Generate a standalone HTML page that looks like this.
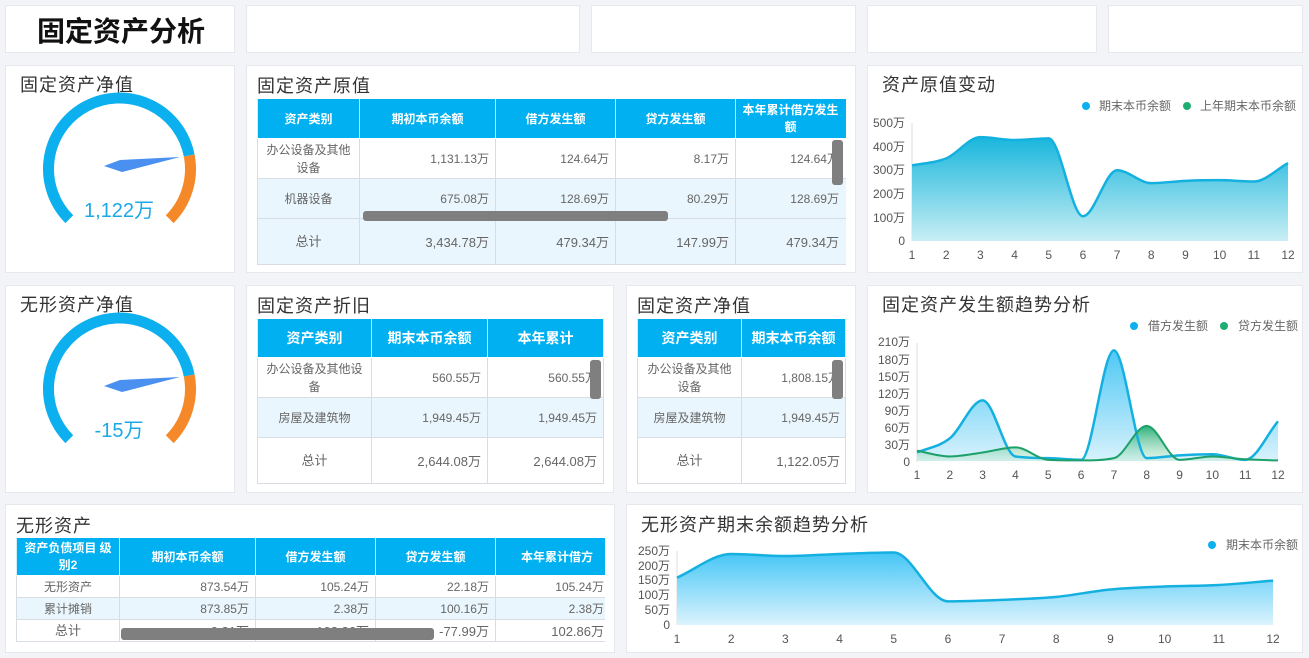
<!DOCTYPE html>
<html><head><meta charset="utf-8">
<style>
*{box-sizing:border-box;margin:0;padding:0}
body{width:1309px;height:658px;background:#f3f4f8;font-family:"Liberation Sans","Noto Sans CJK SC",sans-serif;position:relative;overflow:hidden;color:#333}
.p{position:absolute;background:#fff;border:1px solid #e6e8ee}
.t{position:absolute;font-size:18px;color:#333;letter-spacing:1px;white-space:nowrap}
table{position:absolute;border-collapse:collapse;table-layout:fixed;font-size:12px;color:#666}
td,th{border:1px solid #d8dde3;overflow:hidden;white-space:nowrap}
th{background:#00b0f0;color:#fff;font-weight:bold;font-size:12px;text-align:center;border-color:#fff #d0eefa}
td{text-align:right;padding-right:6px}
td.c{text-align:center;padding:0 4px;white-space:normal;line-height:18px}
tr.b td{background:#eaf6fd}
.sb{position:absolute;background:#7f7f7f;border-radius:3px}
svg text{font-family:"Liberation Sans","Noto Sans CJK SC",sans-serif}
</style></head><body>
<div class="p" style="left:5px;top:5px;width:230px;height:48px"></div>
<div style="position:absolute;left:37px;top:10px;font-size:28px;font-weight:bold;color:#111">固定资产分析</div>
<div class="p" style="left:246px;top:5px;width:334px;height:48px"></div>
<div class="p" style="left:591px;top:5px;width:265px;height:48px"></div>
<div class="p" style="left:867px;top:5px;width:230px;height:48px"></div>
<div class="p" style="left:1108px;top:5px;width:195px;height:48px"></div>

<div class="p" style="left:5px;top:65px;width:230px;height:208px"></div>
<div class="t" style="left:20px;top:71px">固定资产净值</div>
<svg style="position:absolute;left:0;top:60px" width="240" height="220">
<g transform="translate(0,-60)">
<path d="M69.3 219.2 A71 71 0 1 1 189.2 155.5" fill="none" stroke="#0cb0ee" stroke-width="11"/>
<path d="M189.2 155.5 A71 71 0 0 1 169.7 219.2" fill="none" stroke="#f5892a" stroke-width="11"/>
<polygon points="180,157 120,160 104,166 122,172" fill="#4a90f0"/>
<text x="119" y="217" font-size="20" fill="#1aa9e6" text-anchor="middle">1,122万</text>
</g></svg>

<div class="p" style="left:246px;top:65px;width:610px;height:208px;overflow:hidden">
<div class="t" style="left:10px;top:6px">固定资产原值</div>
<table style="left:10px;top:32px;width:598px">
<colgroup><col style="width:102px"><col style="width:136px"><col style="width:120px"><col style="width:120px"><col style="width:120px"></colgroup>
<tr style="height:40px"><th>资产类别</th><th>期初本币余额</th><th>借方发生额</th><th>贷方发生额</th><th style="white-space:normal;line-height:17px;padding:0 12px 0 2px">本年累计借方发生额</th></tr>
<tr style="height:40px"><td class="c">办公设备及其他设备</td><td>1,131.13万</td><td>124.64万</td><td>8.17万</td><td style="padding-right:16px">124.64万</td></tr>
<tr class="b" style="height:40px"><td class="c">机器设备</td><td>675.08万</td><td>128.69万</td><td>80.29万</td><td style="padding-right:16px">128.69万</td></tr>
<tr class="b" style="height:46px"><td class="c" style="font-size:13px">总计</td><td style="font-size:13px">3,434.78万</td><td style="font-size:13px">479.34万</td><td style="font-size:13px">147.99万</td><td style="font-size:13px;padding-right:16px">479.34万</td></tr>
</table>
<div style="position:absolute;left:599px;top:30px;width:12px;height:180px;background:#fff"></div>
</div>
<div class="sb" style="left:363px;top:211px;width:305px;height:10px"></div>
<div class="sb" style="left:832px;top:140px;width:11px;height:45px"></div>

<div class="p" style="left:867px;top:65px;width:436px;height:208px"></div>
<div class="t" style="left:882px;top:71px">资产原值变动</div>
<svg style="position:absolute;left:867px;top:65px" width="436" height="208">
<defs><linearGradient id="g1" x1="0" y1="0" x2="0" y2="1"><stop offset="0" stop-color="#18b6dc"/><stop offset="1" stop-color="#c8eef4"/></linearGradient>
<linearGradient id="g2" x1="0" y1="0" x2="0" y2="1"><stop offset="0" stop-color="#4fc8f5"/><stop offset="1" stop-color="#d8f2fc"/></linearGradient>
<linearGradient id="g3" x1="0" y1="0" x2="0" y2="1"><stop offset="0" stop-color="#2bb07a"/><stop offset="1" stop-color="#c8ecd8" stop-opacity=".5"/></linearGradient>
<linearGradient id="g4" x1="0" y1="0" x2="0" y2="1"><stop offset="0" stop-color="#45c6f6"/><stop offset="1" stop-color="#dcf3fd"/></linearGradient></defs>
<circle cx="219" cy="41" r="4" fill="#0cb0ee"/><text x="232" y="45" font-size="12" fill="#666">期末本币余额</text>
<circle cx="320" cy="41" r="4" fill="#1fae72"/><text x="333" y="45" font-size="12" fill="#666">上年期末本币余额</text>
<g font-size="12" fill="#555" text-anchor="end">
<text x="38" y="62">500万</text><text x="38" y="86">400万</text><text x="38" y="109">300万</text><text x="38" y="133">200万</text><text x="38" y="157">100万</text><text x="38" y="180">0</text></g>
<line x1="45" y1="58" x2="45" y2="176" stroke="#ddd"/>
<path id="c1a" fill="url(#g1)"/><path id="c1l" fill="none" stroke="#14b0e0" stroke-width="2.5"/>
<g font-size="12" fill="#555" text-anchor="middle" id="x1"></g>
</svg>

<div class="p" style="left:5px;top:285px;width:230px;height:208px"></div>
<div class="t" style="left:20px;top:291px">无形资产净值</div>
<svg style="position:absolute;left:0;top:280px" width="240" height="220">
<g transform="translate(0,-60)">
<path d="M69.3 219.2 A71 71 0 1 1 189.2 155.5" fill="none" stroke="#0cb0ee" stroke-width="11"/>
<path d="M189.2 155.5 A71 71 0 0 1 169.7 219.2" fill="none" stroke="#f5892a" stroke-width="11"/>
<polygon points="180,157 120,160 104,166 122,172" fill="#4a90f0"/>
<text x="119" y="217" font-size="20" fill="#1aa9e6" text-anchor="middle">-15万</text>
</g></svg>

<div class="p" style="left:246px;top:285px;width:368px;height:208px;overflow:hidden">
<div class="t" style="left:10px;top:6px">固定资产折旧</div>
<table style="left:10px;top:32px;width:346px">
<colgroup><col style="width:114px"><col style="width:116px"><col style="width:116px"></colgroup>
<tr style="height:39px"><th style="font-size:14px">资产类别</th><th style="font-size:14px">期末本币余额</th><th style="font-size:14px">本年累计</th></tr>
<tr style="height:40px"><td class="c">办公设备及其他设备</td><td>560.55万</td><td>560.55万</td></tr>
<tr class="b" style="height:40px"><td class="c">房屋及建筑物</td><td>1,949.45万</td><td>1,949.45万</td></tr>
<tr style="height:46px"><td class="c" style="font-size:13px">总计</td><td style="font-size:13px">2,644.08万</td><td style="font-size:13px">2,644.08万</td></tr>
</table></div>
<div class="sb" style="left:590px;top:360px;width:11px;height:39px"></div>

<div class="p" style="left:626px;top:285px;width:230px;height:208px;overflow:hidden">
<div class="t" style="left:10px;top:6px">固定资产净值</div>
<table style="left:10px;top:32px;width:208px">
<colgroup><col style="width:104px"><col style="width:104px"></colgroup>
<tr style="height:39px"><th style="font-size:14px">资产类别</th><th style="font-size:14px">期末本币余额</th></tr>
<tr style="height:40px"><td class="c">办公设备及其他设备</td><td style="padding-right:5px">1,808.15万</td></tr>
<tr class="b" style="height:40px"><td class="c">房屋及建筑物</td><td style="padding-right:5px">1,949.45万</td></tr>
<tr style="height:46px"><td class="c" style="font-size:13px">总计</td><td style="padding-right:5px;font-size:13px">1,122.05万</td></tr>
</table></div>
<div class="sb" style="left:832px;top:360px;width:11px;height:39px"></div>

<div class="p" style="left:867px;top:285px;width:436px;height:208px"></div>
<div class="t" style="left:882px;top:291px">固定资产发生额趋势分析</div>
<svg style="position:absolute;left:867px;top:285px" width="436" height="208">
<circle cx="267" cy="41" r="4" fill="#0cb0ee"/><text x="281" y="45" font-size="12" fill="#666">借方发生额</text>
<circle cx="357" cy="41" r="4" fill="#1fae72"/><text x="371" y="45" font-size="12" fill="#666">贷方发生额</text>
<g font-size="12" fill="#555" text-anchor="end">
<text x="43" y="61">210万</text><text x="43" y="79">180万</text><text x="43" y="96">150万</text><text x="43" y="113">120万</text><text x="43" y="130">90万</text><text x="43" y="147">60万</text><text x="43" y="164">30万</text><text x="43" y="181">0</text></g>
<line x1="50" y1="58" x2="50" y2="177" stroke="#ddd"/>
<path id="c2a" fill="url(#g2)"/><path id="c3a" fill="url(#g3)"/>
<path id="c2l" fill="none" stroke="#14b0e0" stroke-width="2.5"/><path id="c3l" fill="none" stroke="#1ea06a" stroke-width="2"/>
<g font-size="12" fill="#555" text-anchor="middle" id="x2"></g>
</svg>

<div class="p" style="left:5px;top:504px;width:610px;height:149px;overflow:hidden">
<div class="t" style="left:10px;top:7px">无形资产</div>
<table style="left:10px;top:32px;width:610px">
<colgroup><col style="width:103px"><col style="width:136px"><col style="width:120px"><col style="width:120px"><col style="width:131px"></colgroup>
<tr style="height:38px"><th style="white-space:normal;line-height:17px;padding:0 6px">资产负债项目 级别2</th><th>期初本币余额</th><th>借方发生额</th><th>贷方发生额</th><th style="text-align:left;padding-left:25px">本年累计借方</th></tr>
<tr style="height:22px"><td class="c">无形资产</td><td>873.54万</td><td>105.24万</td><td>22.18万</td><td style="padding-right:22px">105.24万</td></tr>
<tr class="b" style="height:22px"><td class="c">累计摊销</td><td>873.85万</td><td>2.38万</td><td>100.16万</td><td style="padding-right:22px">2.38万</td></tr>
<tr style="height:22px"><td class="c" style="font-size:13px">总计</td><td style="font-size:13px">-0.31万</td><td style="font-size:13px">102.86万</td><td style="font-size:13px">-77.99万</td><td style="font-size:13px;padding-right:22px">102.86万</td></tr>
</table>
<div style="position:absolute;left:599px;top:30px;width:12px;height:120px;background:#fff"></div>
</div>
<div class="sb" style="left:121px;top:628px;width:313px;height:12px"></div>

<div class="p" style="left:626px;top:504px;width:677px;height:149px"></div>
<div class="t" style="left:641px;top:511px">无形资产期末余额趋势分析</div>
<svg style="position:absolute;left:626px;top:504px" width="677" height="149">
<circle cx="586" cy="41" r="4" fill="#0cb0ee"/><text x="600" y="45" font-size="12" fill="#666">期末本币余额</text>
<g font-size="12" fill="#555" text-anchor="end">
<text x="44" y="51">250万</text><text x="44" y="66">200万</text><text x="44" y="80">150万</text><text x="44" y="95">100万</text><text x="44" y="110">50万</text><text x="44" y="125">0</text></g>
<line x1="51" y1="47" x2="51" y2="121" stroke="#ddd"/>
<path id="c4a" fill="url(#g4)"/><path id="c4l" fill="none" stroke="#14b0e0" stroke-width="2.5"/>
<g font-size="12" fill="#555" text-anchor="middle" id="x4"></g>
</svg>

<script>
function sm(p){var n=p.length,h=p[1][0]-p[0][0],dl=[],m=[];for(var i=0;i<n-1;i++)dl.push((p[i+1][1]-p[i][1])/h);
m[0]=dl[0];m[n-1]=dl[n-2];for(i=1;i<n-1;i++){m[i]=(dl[i-1]*dl[i]<=0)?0:(dl[i-1]+dl[i])/2;}
for(i=0;i<n-1;i++){if(dl[i]==0){m[i]=0;m[i+1]=0;continue;}var a=m[i]/dl[i],b=m[i+1]/dl[i],s=a*a+b*b;if(s>9){var t=3/Math.sqrt(s);m[i]=t*a*dl[i];m[i+1]=t*b*dl[i];}}
var d="M"+p[0][0]+" "+p[0][1];for(i=0;i<n-1;i++){d+=" C"+(p[i][0]+h/3)+" "+(p[i][1]+m[i]*h/3)+" "+(p[i+1][0]-h/3)+" "+(p[i+1][1]-m[i+1]*h/3)+" "+p[i+1][0]+" "+p[i+1][1];}return d;}
function mk(data,x0,x1,y0,k,ida,idl){var pts=data.map(function(v,i){return[x0+i*(x1-x0)/11,y0-v*k]});var d=sm(pts);document.getElementById(idl).setAttribute("d",d);document.getElementById(ida).setAttribute("d",d+" L"+x1+" "+y0+" L"+x0+" "+y0+" Z");}
function xl(id,x0,x1,y){var g=document.getElementById(id),s="";for(var i=0;i<12;i++)s+='<text x="'+(x0+i*(x1-x0)/11)+'" y="'+y+'">'+(i+1)+'</text>';g.innerHTML=s;}
mk([320,350,440,428,435,105,300,245,255,258,252,330],45,421,176,0.236,"c1a","c1l");xl("x1",45,421,194);
mk([15,40,107,8,5,2,195,5,10,12,2,70],50,411,176,0.567,"c2a","c2l");
mk([18,8,15,24,2,1,5,62,2,8,3,1],50,411,176,0.567,"c3a","c3l");xl("x2",50,411,194);
mk([160,240,233,240,245,80,85,95,120,130,135,150],51,647,121,0.296,"c4a","c4l");xl("x4",51,647,139);
</script>
</body></html>
